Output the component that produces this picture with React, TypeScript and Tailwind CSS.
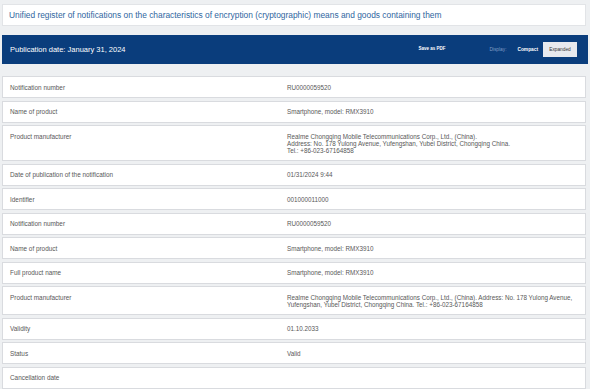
const rows: { label: string; value: string[] }[] = [
  { label: 'Notification number', value: ['RU0000059520'] },
  { label: 'Name of product', value: ['Smartphone, model: RMX3910'] },
  {
    label: 'Product manufacturer',
    value: [
      'Realme Chongqing Mobile Telecommunications Corp., Ltd., (China).',
      'Address: No. 178 Yulong Avenue, Yufengshan, Yubei District, Chongqing China.',
      'Tel.: +86-023-67164858',
    ],
  },
  { label: 'Date of publication of the notification', value: ['01/31/2024 9:44'] },
  { label: 'Identifier', value: ['001000011000'] },
  { label: 'Notification number', value: ['RU0000059520'] },
  { label: 'Name of product', value: ['Smartphone, model: RMX3910'] },
  { label: 'Full product name', value: ['Smartphone, model: RMX3910'] },
  {
    label: 'Product manufacturer',
    value: [
      'Realme Chongqing Mobile Telecommunications Corp., Ltd., (China). Address: No. 178 Yulong Avenue,',
      'Yufengshan, Yubei District, Chongqing China. Tel.: +86-023-67164858',
    ],
  },
  { label: 'Validity', value: ['01.10.2033'] },
  { label: 'Status', value: ['Valid'] },
  { label: 'Cancellation date', value: [] },
]

export default function App() {
  return (
    <div className="h-[389px] w-[590px] overflow-hidden bg-[#eef0f2] px-[2px] pt-[4px] font-['Liberation_Sans',Arial,sans-serif]">
      {/* title */}
      <div className="mr-[2px] flex h-[22px] items-center whitespace-nowrap border border-[#e2e4e7] bg-white pl-[6px] text-[8.4px] text-[#2f66a0]">
        Unified register of notifications on the characteristics of encryption (cryptographic) means and goods containing them
      </div>

      {/* header bar */}
      <div className="mt-[9px] flex h-[29px] items-center bg-[#0a3d7c] pl-[8px] pr-[11px]">
        <div className="text-[7.5px] text-white">Publication date: January 31, 2024</div>
        <div className="ml-auto flex items-center">
          <span className="text-[4.5px] font-bold text-white">Save as PDF</span>
          <span className="ml-[44px] text-[4.8px] text-[#7f9cc4]">Display:</span>
          <span className="ml-[11px] text-[4.8px] font-bold text-white">Compact</span>
          <span className="ml-[5px] flex h-[15px] w-[34px] items-center justify-center bg-[#e7e9ee] text-[4.8px] text-[#333]">
            Expanded
          </span>
        </div>
      </div>

      {/* rows */}
      <div className="mr-[2px] mt-[12px] flex flex-col gap-[2.5px]">
        {rows.map((r, i) => (
          <div
            key={i}
            className="flex min-h-[22px] border border-[#d9dbdf] bg-white py-[6.5px] text-[6.4px] leading-[7px] text-[#585858]"
          >
            <div className="w-[284px] shrink-0 pl-[7px]">{r.label}</div>
            <div className="flex flex-col whitespace-nowrap text-[6.3px]">
              {r.value.map((v, j) => (
                <span key={j}>{v}</span>
              ))}
            </div>
          </div>
        ))}
      </div>
    </div>
  )
}
